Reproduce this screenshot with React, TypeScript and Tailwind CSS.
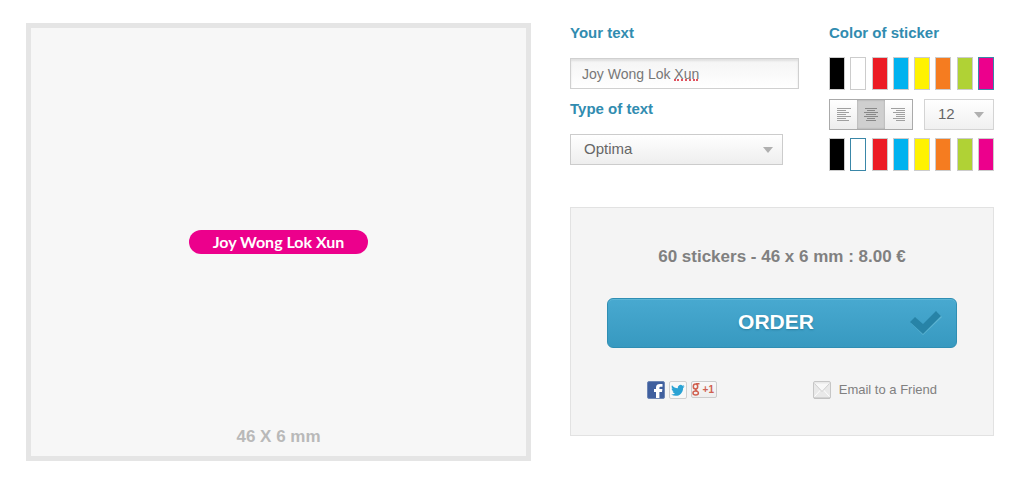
import { useState } from 'react'

const colors = [
  { name: 'Black', value: '#000000' },
  { name: 'White', value: '#ffffff' },
  { name: 'Red', value: '#ec1c24' },
  { name: 'Blue', value: '#00b2ef' },
  { name: 'Yellow', value: '#fff200' },
  { name: 'Orange', value: '#f57c20' },
  { name: 'Green', value: '#b0d235' },
  { name: 'Pink', value: '#ec008c' },
]

const alignments = [
  { name: 'left', path: 'M0 .5h14M0 2.5h9M0 4.5h12M0 6.5h9M0 8.5h14M0 10.5h9M0 12.5h12' },
  { name: 'center', path: 'M1 .5h12M3 2.5h8M0 4.5h14M2 6.5h10M0 8.5h14M3 10.5h8M2 12.5h10' },
  { name: 'right', path: 'M0 .5h14M5 2.5h9M2 4.5h12M5 6.5h9M5 8.5h9M2 10.5h12M5 12.5h9' },
]

function Swatches({ label, selected, onSelect }: { label: string; selected: string; onSelect: (value: string) => void }) {
  return (
    <div role="group" aria-label={label} className="flex justify-between">
      {colors.map((color) => (
        <button
          key={color.name}
          type="button"
          aria-label={color.name}
          aria-pressed={selected === color.value}
          onClick={() => onSelect(color.value)}
          className={`h-[33px] w-4 border ${selected === color.value ? 'border-[#3a87a8]' : 'border-[#cccccc]'}`}
          style={{ backgroundColor: color.value }}
        />
      ))}
    </div>
  )
}

function Arrow() {
  return (
    <svg viewBox="0 0 10 6" className="pointer-events-none absolute top-[13px] right-[10px] h-[6px] w-[10px]" aria-hidden="true">
      <path d="M0 0h10L5 6z" fill="#b0b0b0" />
    </svg>
  )
}

function Preview({ text, background, color, align }: { text: string; background: string; color: string; align: string }) {
  const justify = align === 'left' ? 'justify-start' : align === 'right' ? 'justify-end' : 'justify-center'
  return (
    <section aria-label="Preview" className="grid min-h-[438px] grid-rows-[1fr_auto_1fr] justify-items-center border-5 border-[#e5e5e5] bg-[#f7f7f7]">
      <div
        className={`row-start-2 flex h-6 w-[179px] items-center rounded-full px-5 font-['Lato','Liberation_Sans',sans-serif] text-[16px] leading-6 font-bold ${justify}`}
        style={{ backgroundColor: background, color }}
      >
        {text}
      </div>
      <p className="row-start-3 self-end pb-[9px] text-[17px] leading-5 font-bold text-[#b9b9b9]">46 X 6 mm</p>
    </section>
  )
}

function OrderPanel() {
  return (
    <section className="mt-9 border border-[#e2e2e2] bg-[#f4f4f4] px-9 pt-[39px] pb-9">
      <p className="text-center text-[17px] leading-5 font-bold text-[#808080]">60 stickers - 46 x 6 mm : 8.00 €</p>
      <button
        type="button"
        className="relative mt-[31px] flex h-[50px] w-full items-center justify-center rounded-md border border-[#2f8eb3] bg-linear-to-b from-[#48a9d0] to-[#3799c0] pr-3 pb-0.5 text-[21px] font-bold text-white shadow-[inset_0_1px_0_#5cb6d6] [text-shadow:0_1px_2px_#2a7f9f]"
      >
        ORDER
        <svg viewBox="0 0 32 24" className="absolute top-3 right-[14px] h-6 w-8" aria-hidden="true">
          <path d="M1 12l5-5 7 7L27 1l5 5-19 18z" fill="#5db4d3" />
          <path d="M0 11l5-5 8 7L26 0l5 5-18 18z" fill="#2783a7" />
        </svg>
      </button>
      <div className="mt-[33px] flex items-center justify-between pr-5 pl-10">
        <div className="flex gap-1">
          <a href="#facebook" aria-label="Facebook">
            <svg viewBox="0 0 18 18" className="size-[18px]">
              <rect x=".5" y=".5" width="17" height="17" rx="1.5" fill="#3f5f9e" stroke="#6d86b5" />
              <path d="M9 17v-6H7V8h2V6.500C9 4 10.500 3 13 3h2.500v2.800H14c-1.200 0-1.600.4-1.600 1.300V8h3l-.4 3h-2.600v6z" fill="#fff" />
            </svg>
          </a>
          <a href="#twitter" aria-label="Twitter">
            <svg viewBox="0 0 18 18" className="size-[18px]">
              <rect x=".5" y=".5" width="17" height="17" rx="1.500" fill="#f8f8f8" stroke="#d0d0d0" />
              <path d="M15.500 5.200c-.5.200-1 .4-1.500.4.500-.3 1-.8 1.200-1.500-.6.300-1.100.5-1.700.6a2.800 2.800 0 0 0-4.700 2.500C6.500 7.100 4.400 6 3 4.200c-.8 1.300-.3 2.900.8 3.700-.4 0-.9-.1-1.200-.3 0 1.300.9 2.500 2.200 2.800-.4.100-.8.100-1.200 0 .3 1.100 1.300 1.900 2.600 1.900-1.200.9-2.600 1.300-4.100 1.200 5.700 3.500 12-.1 12-6.600.6-.4 1.100-1 1.400-1.700z" fill="#2ba3d4" />
            </svg>
          </a>
          <a
            href="#google"
            aria-label="Google +1"
            className="flex h-[17px] w-[26px] items-center justify-between rounded-xs border border-[#cccccc] bg-linear-to-b from-[#f8f8f8] to-[#eeeeee] pr-[2px] text-[#d0604f]"
          >
            <svg viewBox="0 0 8 13" className="h-[13px] w-2" fill="none" stroke="currentColor" strokeWidth="1.500">
              <ellipse cx="3.500" cy="3.500" rx="2.200" ry="2.500" />
              <path d="M4 .8h3.500M4.500 6c-2 1-.5 1.500.8 2.500" />
              <ellipse cx="3.700" cy="10" rx="2.700" ry="2" />
            </svg>
            <span className="text-[10px] leading-none font-bold">+1</span>
          </a>
        </div>
        <a href="#email" className="flex items-center gap-2 text-[13px] leading-[18px] text-[#808080]">
          <svg viewBox="0 0 18 18" className="size-[18px]" aria-hidden="true">
            <rect x=".5" y=".5" width="17" height="17" rx="1.500" fill="#e9e9e9" stroke="#c6c6c6" />
            <path d="M1.500 15.500l6-6.500M16.500 15.500l-6-6.500" stroke="#fff" />
            <path d="M1.500 2.500l7.500 8 7.500-8" fill="#f8f8f8" stroke="#cfcfcf" />
            <path d="M1 17h16" stroke="#bdbdbd" />
          </svg>
          Email to a Friend
        </a>
      </div>
    </section>
  )
}

export default function App() {
  const [text, setText] = useState('Joy Wong Lok Xun')
  const [background, setBackground] = useState('#ec008c')
  const [color, setColor] = useState('#ffffff')
  const [align, setAlign] = useState('center')

  return (
    <main className="grid grid-cols-[505fr_424fr] gap-[39px] bg-white pt-[23px] pr-[30px] pb-7 pl-[26px] font-['Liberation_Sans',Arial,sans-serif]">
      <Preview text={text} background={background} color={color} align={align} />

      <div>
        <div className="grid grid-cols-[229fr_165fr] gap-[30px]">
          <div>
            <label htmlFor="text" className="block text-[15px] leading-5 font-bold text-[#318cb0]">Your text</label>
            <div className="relative mt-[15px]">
              <input
                id="text"
                value={text}
                spellCheck={false}
                onChange={(e) => setText(e.target.value)}
                className="block h-[31px] w-full border border-[#d0d0d0] bg-linear-to-b from-[#f4f4f4] to-white px-[11px] text-[14px] text-[#777777] shadow-[inset_0_2px_2px_#e0e0e0] outline-none"
              />
              {text.endsWith('Xun') && (
                <span className="absolute top-[21px] left-[104px] w-6 border-b-2 border-dotted border-[#e0525f]" />
              )}
            </div>
            <label htmlFor="font" className="mt-[10px] block text-[15px] leading-5 font-bold text-[#318cb0]">Type of text</label>
            <div className="relative mt-[15px] mr-4">
              <select id="font" className="block h-[31px] w-full appearance-none border border-[#cccccc] bg-linear-to-b from-white to-[#eeeeee] px-[13px] text-[15px] text-[#666666]">
                <option>Optima</option>
                <option>Arial</option>
              </select>
              <Arrow />
            </div>
          </div>

          <div>
            <h2 className="mb-[14px] text-[15px] leading-5 font-bold text-[#318cb0]">Color of sticker</h2>
            <Swatches label="Color of sticker" selected={background} onSelect={setBackground} />
            <div className="mt-[9px] mb-2 flex justify-between">
              <div role="group" aria-label="Text alignment" className="flex h-[31px] w-[84px] border border-[#aaaaaa]">
                {alignments.map((item) => (
                  <button
                    key={item.name}
                    type="button"
                    aria-label={`Align ${item.name}`}
                    aria-pressed={align === item.name}
                    onClick={() => setAlign(item.name)}
                    className={`flex flex-1 items-center justify-center ${align === item.name ? 'bg-[#cfcfcf] text-[#888888] shadow-[inset_0_0_2px_#999999]' : 'bg-linear-to-b from-white to-[#ededed] text-[#a0a0a0]'}`}
                  >
                    <svg viewBox="0 0 14 13" className="h-[13px] w-[14px]" aria-hidden="true">
                      <path d={item.path} stroke="currentColor" />
                    </svg>
                  </button>
                ))}
              </div>
              <div className="relative w-[70px]">
                <select aria-label="Text size" className="block h-[31px] w-full appearance-none border border-[#d4d4d4] bg-linear-to-b from-white to-[#f0f0f0] px-[13px] text-[15px] text-[#666666]">
                  <option>12</option>
                  <option>14</option>
                </select>
                <Arrow />
              </div>
            </div>
            <Swatches label="Color of text" selected={color} onSelect={setColor} />
          </div>
        </div>

        <OrderPanel />
      </div>
    </main>
  )
}
